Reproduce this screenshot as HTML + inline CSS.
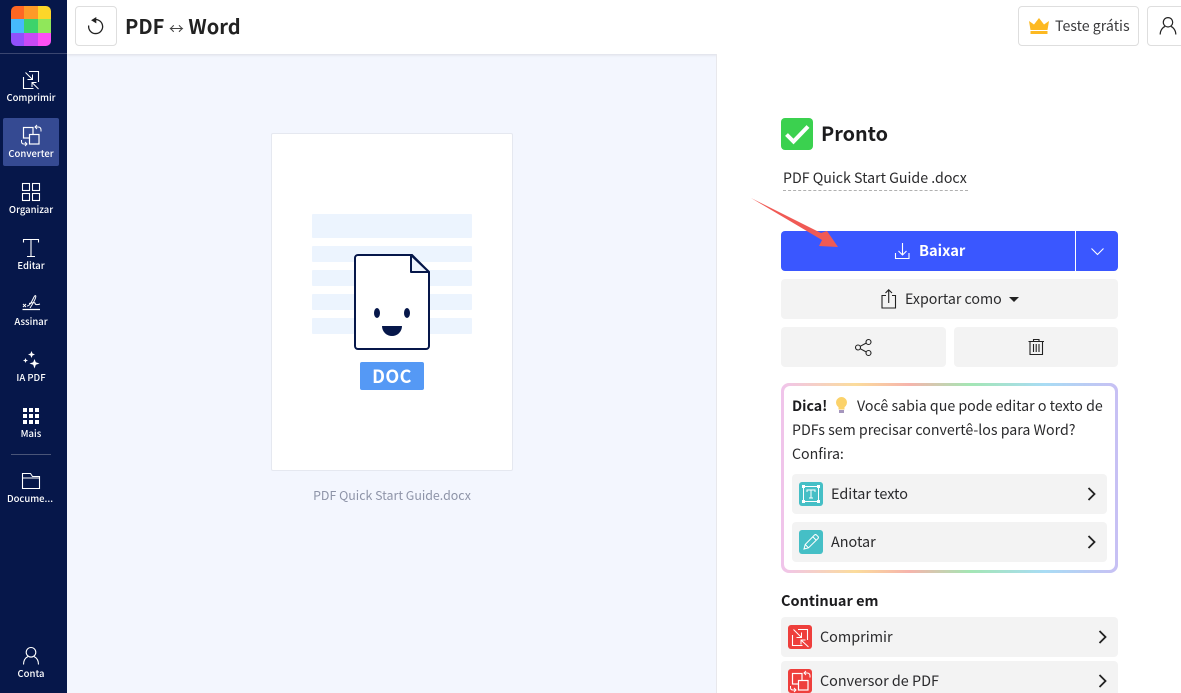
<!DOCTYPE html>
<html lang="pt">
<head>
<meta charset="utf-8">
<title>PDF ↔ Word</title>
<style>
html,body{margin:0;padding:0;width:1181px;height:693px;overflow:hidden;background:#f3f6fe}
*{box-sizing:border-box}
body{font-family:"Noto Sans CJK SC","Noto Sans CJK JP","Liberation Sans",sans-serif;color:#1c1c1e;position:relative}
.a{position:absolute}
.t{position:absolute;white-space:nowrap;line-height:20px}
.side{left:0;top:0;width:67px;height:693px;background:#06174a}
.sl{position:absolute;left:0;width:62px;text-align:center;color:#fff;font-size:9.500px;line-height:14px;font-weight:500;white-space:nowrap}
.btn{position:absolute;background:#f3f3f3;border-radius:4px}
svg{position:absolute;display:block;overflow:visible}
</style>
</head>
<body>
<!-- header -->
<div class="a" style="left:67px;top:0;width:1114px;height:54px;background:#fff;box-shadow:0 1px 3px rgba(0,0,0,.1)"></div>
<div class="a" style="left:75px;top:6px;width:42px;height:40px;border:1px solid #dedede;border-radius:4px;background:#fff"></div>
<svg style="left:75px;top:6px" width="42" height="40" viewBox="0 0 42 40" fill="none" stroke="#222" stroke-width="1.300"><path d="M17.500 14.300a7 7 0 1 1-3.800 5.200"/><path d="M21.300 11v6.400l-5.200-3.200z" fill="#222" stroke="none"/></svg>
<div class="t" style="left:125px;top:14px;font-size:20px;line-height:24px;font-weight:700;color:#222">PDF <span style="font-weight:400;font-size:15px;color:#444">↔</span> Word</div>
<div class="a" style="left:1018px;top:6px;width:121px;height:40px;border:1px solid #dedede;border-radius:4px;background:#fff"></div>
<svg style="left:1029px;top:17px" width="20" height="18" viewBox="0 0 20 18"><path d="M0 4l5 3.500L10 1l5 6.500L20 4l-1.500 9H1.500z" fill="#fdb921"/><rect x="1.500" y="14" width="17" height="3" fill="#fdb921"/></svg>
<div class="t" style="left:1055px;top:16px;font-size:14.200px;color:#3a3a3c">Teste grátis</div>
<div class="a" style="left:1147px;top:6px;width:50px;height:40px;border:1px solid #dedede;border-radius:4px;background:#fff"></div>
<svg style="left:1159px;top:16px" width="18" height="20" viewBox="0 0 18 20" fill="none" stroke="#222" stroke-width="1.200"><circle cx="9" cy="6.300" r="4.700"/><path d="M1.200 18.500c0-4.500 3-7.500 4.800-8M16.800 18.500c0-4.500-3-7.500-4.800-8"/></svg>

<!-- sidebar -->
<div class="a side"></div>
<div class="a" style="left:11px;top:6px;width:40px;height:40px;border-radius:5px;overflow:hidden;display:grid;grid-template-columns:13px 14px 13px;grid-template-rows:13px 14px 13px">
<i style="background:#ff6723"></i><i style="background:#fd9a28"></i><i style="background:#fdd62a"></i>
<i style="background:#46b9fd"></i><i style="background:#3dd36b"></i><i style="background:#90e75a"></i>
<i style="background:#9150fb"></i><i style="background:#c84af5"></i><i style="background:#fd50f5"></i>
</div>
<div class="a" style="left:0;top:53px;width:67px;height:1px;background:#3a4670"></div>
<div class="a" style="left:3px;top:118px;width:56px;height:48px;background:#354a92;border-radius:2px"></div>

<svg style="left:21px;top:69px" width="20" height="20" viewBox="0 0 20 20" fill="none" stroke="#fff" stroke-width="1.100"><path d="M8 2.500H17.500V13M2.500 8V19.500H12.500"/><path d="M4.500 3.500l7 7M11.500 5.500v5H6.500M17.500 20l-6.500-6.500M11 18v-4.500h4.500" stroke-width="1"/></svg>
<div class="sl" style="top:90px">Comprimir</div>

<svg style="left:20px;top:124px" width="22" height="22" viewBox="0 0 22 22" fill="none" stroke="#fff" stroke-width="1.200"><rect x="3.500" y="3.500" width="9.500" height="10.500"/><rect x="9.500" y="10.500" width="9.500" height="9.500" fill="#354a92"/><path d="M17 1l-2 2 2 2M15 3h3c2 0 3 1 3 3v1.500M1.500 16v1.500c0 1.500 1 2.500 2.500 2.500h3M5 18l2 2-2 2" stroke-width="1"/></svg>
<div class="sl" style="top:146px">Converter</div>

<svg style="left:22px;top:183px" width="18" height="18" viewBox="0 0 18 18" fill="none" stroke="#fff" stroke-width="1.100"><rect x=".5" y=".5" width="7" height="7"/><rect x="10.500" y=".5" width="7" height="7"/><rect x=".5" y="10.500" width="7" height="7"/><rect x="10.500" y="10.500" width="7" height="7"/></svg>
<div class="sl" style="top:202px">Organizar</div>

<svg style="left:23px;top:239px" width="16" height="18" viewBox="0 0 16 18" fill="none" stroke="#fff" stroke-width="1.100"><path d="M.5 3.500V.5h15v3M8 .5V17.500M4 17.500h8"/></svg>
<div class="sl" style="top:258px">Editar</div>

<svg style="left:22px;top:294px" width="19" height="18" viewBox="0 0 19 18" fill="none" stroke="#fff" stroke-width="1"><path d="M.5 15.500h17.500" stroke-width="1.200"/><path d="M1 10l3 3M4 10l-3 3M5 12C8 12 10 7 12 3C13 1 14.500 1 13.500 4C12.500 7 10 11 8 14M7 9.500C10 9 12 8 13 9C13 11 15 11 18 10"/></svg>
<div class="sl" style="top:314px">Assinar</div>

<svg style="left:23px;top:351px" width="17" height="18" viewBox="0 0 17 18" fill="#fff"><path d="M8.500 0l1 2.500 2.500 1-2.500 1-1 2.500-1-2.500-2.500-1 2.500-1zM2.500 7l.7 1.800 1.800.7-1.800.7-.7 1.800-.7-1.800L0 9.500l1.800-.7zM11.500 8l1.300 3.200 3.700 1.300-3.700 1.300-1.300 3.700-1.300-3.700-3.700-1.300 3.700-1.300z"/></svg>
<div class="sl" style="top:370px">IA PDF</div>

<svg style="left:23px;top:408px" width="16" height="16" viewBox="0 0 16 16" fill="#fff"><rect width="4" height="4"/><rect x="6" width="4" height="4"/><rect x="12" width="4" height="4"/><rect y="6" width="4" height="4"/><rect x="6" y="6" width="4" height="4"/><rect x="12" y="6" width="4" height="4"/><rect y="12" width="4" height="4"/><rect x="6" y="12" width="4" height="4"/><rect x="12" y="12" width="4" height="4"/></svg>
<div class="sl" style="top:426px">Mais</div>

<div class="a" style="left:11px;top:454px;width:40px;height:1px;background:#4a5578"></div>
<svg style="left:22px;top:473px" width="18" height="16" viewBox="0 0 18 16" fill="none" stroke="#fff" stroke-width="1.100"><path d="M.5 15.500V.5h8l2 3h7v12zM.5 5h17"/></svg>
<div class="sl" style="top:491px;left:-1px">Docume...</div>

<svg style="left:22px;top:646px" width="18" height="20" viewBox="0 0 18 20" fill="none" stroke="#fff" stroke-width="1.100"><circle cx="9" cy="6.300" r="4.800"/><path d="M1.500 18.500c0-4.500 2.500-7 4.500-8M16.500 18.500c0-4.500-2.500-7-4.500-8"/></svg>
<div class="sl" style="top:666px">Conta</div>

<!-- card -->
<div class="a" style="left:271px;top:133px;width:242px;height:338px;background:#fff;border:1px solid #e5e8f0;border-radius:2px"></div>
<div class="a" style="left:312px;top:214px;width:160px;height:24px;background:#ecf4fe;border-radius:1px"></div>
<div class="a" style="left:312px;top:246px;width:160px;height:16px;background:#ecf4fe;border-radius:1px"></div>
<div class="a" style="left:312px;top:270px;width:160px;height:16px;background:#ecf4fe;border-radius:1px"></div>
<div class="a" style="left:312px;top:294px;width:160px;height:16px;background:#ecf4fe;border-radius:1px"></div>
<div class="a" style="left:312px;top:318px;width:160px;height:16px;background:#ecf4fe;border-radius:1px"></div>
<svg style="left:354px;top:254px" width="76" height="96" viewBox="0 0 76 96" fill="none">
<path d="M4 1H58L75 18V92a3 3 0 0 1-3 3H4a3 3 0 0 1-3-3V4a3 3 0 0 1 3-3z" fill="#fff" stroke="#06174a" stroke-width="2"/>
<path d="M57 1V18H75z" fill="#eef4fd" stroke="#06174a" stroke-width="2" stroke-linejoin="round"/>
<ellipse cx="23" cy="59" rx="3" ry="5" fill="#06174a"/><ellipse cx="53" cy="59" rx="3" ry="5" fill="#06174a"/>
<path d="M28 72H48a10 10 0 0 1-20 0z" fill="#06174a"/>
</svg>
<div class="a" style="left:360px;top:362px;width:64px;height:28px;background:#5599f5;border-radius:2px;color:#fff;font-size:18px;font-weight:700;line-height:28px;text-align:center;letter-spacing:.4px">DOC</div>
<div class="t" style="left:271px;width:242px;top:485px;text-align:center;font-size:12.400px;color:#8e94a8">PDF Quick Start Guide.docx</div>

<!-- right panel -->
<div class="a" style="left:716px;top:54px;width:465px;height:639px;background:#fff;border-left:1px solid #e8e8ec"></div>
<div class="a" style="left:781px;top:118px;width:32px;height:32px;background:#3bd14f;border-radius:4px"></div>
<svg style="left:781px;top:118px" width="32" height="32" viewBox="0 0 32 32" fill="none" stroke="#fff" stroke-width="4"><path d="M5.500 16.500L12.500 23.500L27 8.500"/></svg>
<div class="t" style="left:821px;top:119px;font-size:19.800px;line-height:28px;font-weight:700;color:#1c1c1e">Pronto</div>
<div class="t" style="left:783px;top:168px;font-size:14.200px;color:#2a2a2c">PDF Quick Start Guide .docx</div>
<div class="a" style="left:783px;top:190px;width:185px;height:0;border-top:1px dashed #b0b0b0"></div>

<div class="a" style="left:781px;top:231px;width:337px;height:40px;background:#3a57ff;border-radius:4px"></div>
<div class="a" style="left:1075px;top:231px;width:1px;height:40px;background:#fff"></div>
<svg style="left:895px;top:243px" width="15" height="16" viewBox="0 0 15 16" fill="none" stroke="#fff" stroke-width="1.100"><path d="M7.500 0v12M3.500 8l4 4 4-4M.5 10v5.500h13.500V10"/></svg>
<div class="t" style="left:919px;top:241px;font-size:14.700px;font-weight:700;color:#fff">Baixar</div>
<svg style="left:1091px;top:248px" width="13" height="7" viewBox="0 0 13 7" fill="none" stroke="#fff" stroke-width="1.100"><path d="M.5 .5l6 6 6-6"/></svg>
<svg style="left:750px;top:197px" width="90" height="50" viewBox="0 0 90 50"><path d="M1 1L71 36L77 34L88 50L69 49L72 43z" fill="#f05a55"/></svg>

<div class="btn" style="left:781px;top:279px;width:337px;height:40px"></div>
<svg style="left:881px;top:289px" width="16" height="20" viewBox="0 0 16 20" fill="none" stroke="#222" stroke-width="1.100"><path d="M5 6.500H1V19h13.500V6.500H11M7.700 14V1M4.500 4l3.200-3.200L11 4"/></svg>
<div class="t" style="left:905px;top:289px;font-size:14.200px;color:#2a2a2c">Exportar como</div>
<div class="a" style="left:1009px;top:297px;width:0;height:0;border:5px solid transparent;border-top:5px solid #222;border-bottom:0"></div>

<div class="btn" style="left:781px;top:327px;width:165px;height:40px"></div>
<svg style="left:855px;top:339px" width="17" height="17" viewBox="0 0 17 17" fill="none" stroke="#222" stroke-width="1.100"><circle cx="3" cy="8.500" r="2.500"/><circle cx="13.500" cy="3" r="2.500"/><circle cx="13.500" cy="14" r="2.500"/><path d="M5.200 7.300L11.300 4M5.200 9.700L11.300 13"/></svg>
<div class="btn" style="left:954px;top:327px;width:164px;height:40px"></div>
<svg style="left:1028px;top:339px" width="17" height="16" viewBox="0 0 17 16" fill="none" stroke="#222" stroke-width="1.100"><path d="M.5 2.500h15.500M5.500 2.500V.5h5.500v2M2 2.500V15.500h12.500V2.500M5.500 5v8M8.200 5v8M11 5v8"/></svg>

<!-- tip -->
<div class="a" style="left:781px;top:383px;width:337px;height:190px;border-radius:8px;background:linear-gradient(90deg,#f0c4ec 0%,#fbdc9c 22%,#f6b4ac 38%,#a4e6b4 56%,#a8dcf4 78%,#c8c0f4 100%)"></div>
<div class="a" style="left:784px;top:386px;width:331px;height:184px;border-radius:6px;background:#fff"></div>
<div class="t" style="left:792px;top:396px;font-size:14.200px;font-weight:700;color:#1c1c1e">Dica!</div>
<svg style="left:834px;top:397px" width="15" height="17" viewBox="0 0 15 17"><path d="M7.500 0a5.500 5.500 0 0 1 3 10.100V12.500H4.500V10.100A5.500 5.500 0 0 1 7.500 0z" fill="#fbd26a"/><path d="M5 13h5v3H5z" fill="#a596bd"/></svg>
<div class="t" style="left:857px;top:396px;font-size:14.200px;color:#2a2a2c">Você sabia que pode editar o texto de</div>
<div class="t" style="left:792px;top:420px;font-size:14.200px;color:#2a2a2c">PDFs sem precisar convertê-los para Word?</div>
<div class="t" style="left:792px;top:444px;font-size:14.200px;color:#2a2a2c">Confira:</div>

<div class="btn" style="left:792px;top:474px;width:315px;height:40px"></div>
<div class="a" style="left:799px;top:482px;width:24px;height:24px;background:#45bfc6;border-radius:3px"></div>
<svg style="left:799px;top:482px" width="24" height="24" viewBox="0 0 24 24" fill="none" stroke="#fff" stroke-width="1"><rect x="4.500" y="4.500" width="15" height="15"/><g fill="#fff" stroke="none"><rect x="3" y="3" width="3" height="3"/><rect x="18" y="3" width="3" height="3"/><rect x="3" y="18" width="3" height="3"/><rect x="18" y="18" width="3" height="3"/></g><path d="M8 10V8h8v2M12 8v8M10 16h4"/></svg>
<div class="t" style="left:831px;top:484px;font-size:14.400px;color:#2a2a2c">Editar texto</div>
<svg style="left:1087px;top:487px" width="10" height="14" viewBox="0 0 10 14" fill="none" stroke="#222" stroke-width="1.800"><path d="M1.500 1l6 6-6 6"/></svg>

<div class="btn" style="left:792px;top:522px;width:315px;height:40px"></div>
<div class="a" style="left:799px;top:530px;width:24px;height:24px;background:#45bfc6;border-radius:3px"></div>
<svg style="left:799px;top:530px" width="24" height="24" viewBox="0 0 24 24" fill="none" stroke="#fff" stroke-width="1"><path d="M5 19l1.200-4.500L15.500 5a1.500 1.500 0 0 1 2 0l1.500 1.500a1.500 1.500 0 0 1 0 2L9.500 17.800zM14 7l3.500 3.500M6.200 14.500l3.300 3.300"/></svg>
<div class="t" style="left:831px;top:532px;font-size:14.400px;color:#2a2a2c">Anotar</div>
<svg style="left:1087px;top:535px" width="10" height="14" viewBox="0 0 10 14" fill="none" stroke="#222" stroke-width="1.800"><path d="M1.500 1l6 6-6 6"/></svg>

<div class="t" style="left:781px;top:591px;font-size:14.500px;font-weight:700;color:#1c1c1e">Continuar em</div>

<div class="btn" style="left:781px;top:617px;width:337px;height:40px"></div>
<div class="a" style="left:788px;top:625px;width:24px;height:24px;background:#ee3f3c;border-radius:3px"></div>
<svg style="left:790px;top:627px" width="20" height="20" viewBox="0 0 20 20" fill="none" stroke="#fff" stroke-width="1.100"><path d="M8 2.500H17.500V13M2.500 8V18.500H12.500"/><path d="M3.500 2.500l8 8M11.500 5.500v5H6.500M18.500 20l-7.500-7M11 17.500v-4.500h4.500" stroke-width="1"/></svg>
<div class="t" style="left:820px;top:627px;font-size:14.400px;color:#2a2a2c">Comprimir</div>
<svg style="left:1098px;top:630px" width="10" height="14" viewBox="0 0 10 14" fill="none" stroke="#222" stroke-width="1.800"><path d="M1.500 1l6 6-6 6"/></svg>

<div class="btn" style="left:781px;top:661px;width:337px;height:40px"></div>
<div class="a" style="left:788px;top:669px;width:24px;height:24px;background:#ee3f3c;border-radius:3px"></div>
<svg style="left:789px;top:670px" width="22" height="22" viewBox="0 0 22 22" fill="none" stroke="#fff" stroke-width="1.200"><rect x="3.500" y="3.500" width="9.500" height="10.500"/><rect x="9.500" y="10.500" width="9.500" height="9.500" fill="#ee3f3c"/><path d="M17 1l-2 2 2 2M15 3h3c2 0 3 1 3 3v1.500M1.500 16v1.500c0 1.500 1 2.500 2.500 2.500h3M5 18l2 2-2 2" stroke-width="1"/></svg>
<div class="t" style="left:820px;top:671px;font-size:14.400px;color:#2a2a2c">Conversor de PDF</div>
<svg style="left:1098px;top:674px" width="10" height="14" viewBox="0 0 10 14" fill="none" stroke="#222" stroke-width="1.800"><path d="M1.500 1l6 6-6 6"/></svg>
</body>
</html>
